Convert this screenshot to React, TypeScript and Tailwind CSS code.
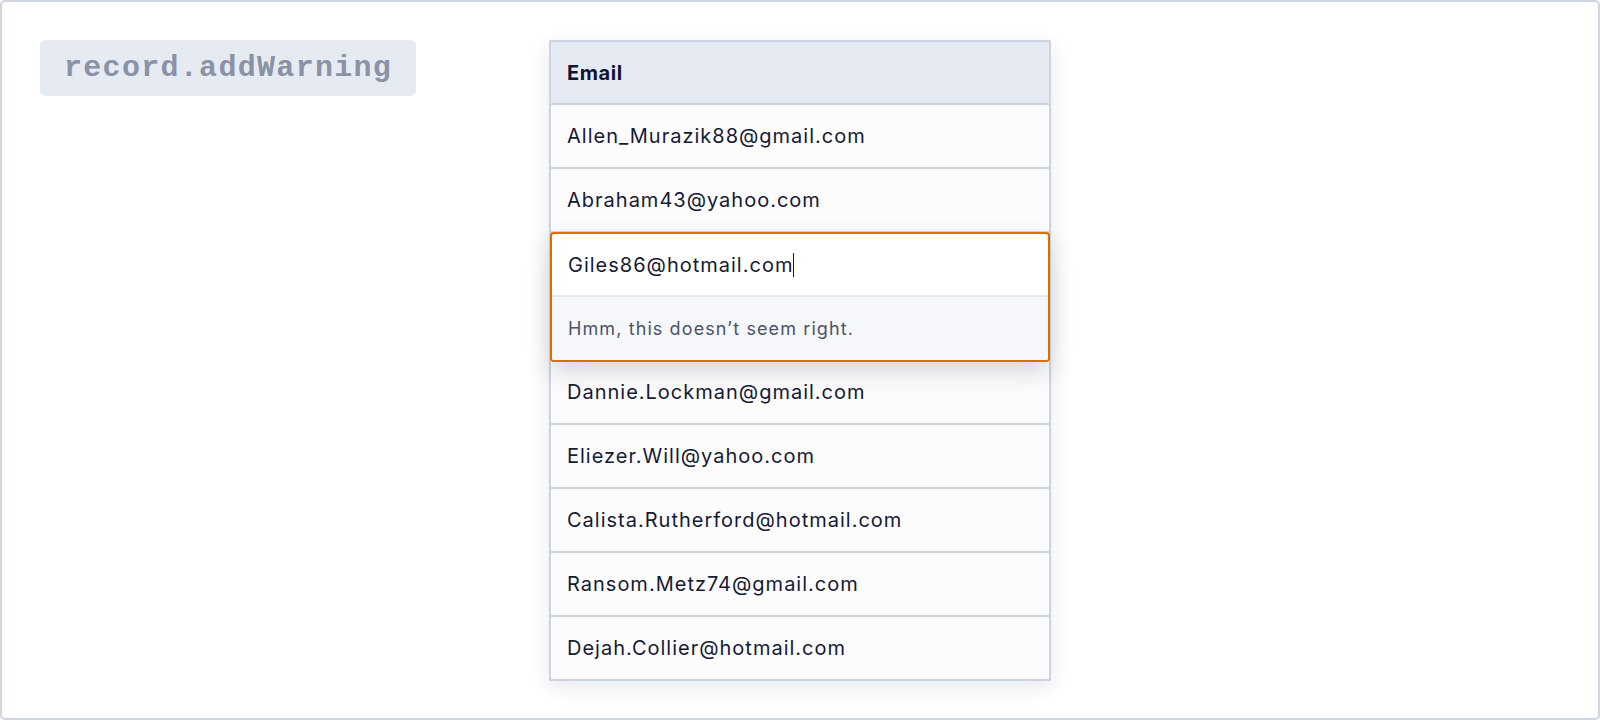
import React from 'react';

const emails = [
  'Allen_Murazik88@gmail.com',
  'Abraham43@yahoo.com',
  'Giles86@hotmail.com',
  'Dannie.Lockman@gmail.com',
  'Eliezer.Will@yahoo.com',
  'Calista.Rutherford@hotmail.com',
  'Ransom.Metz74@gmail.com',
  'Dejah.Collier@hotmail.com',
];

const font = { fontFamily: 'Inter, "Noto Sans", sans-serif' };

function Cell({ children }: { children: React.ReactNode }) {
  return (
    <div className="flex h-16 items-center border-b-2 border-[#cdd4e1] bg-[#fcfcfd] px-4 text-[20px] tracking-[1px] text-[#151a35]">
      {children}
    </div>
  );
}

function WarningCell({ value }: { value: string }) {
  return (
    <div className="relative z-10 -mx-px -my-px overflow-hidden rounded-[4px] border-2 border-[#e06c00] bg-white shadow-[0_10px_24px_rgba(20,30,60,0.16)]">
      <div className="flex h-[63px] items-center border-b-2 border-[#e6eaf1] px-4 text-[20px] tracking-[1px] text-[#151a35]">
        {value}
        <span className="inline-block h-[24px] w-px bg-[#151a35]" />
      </div>
      <div className="flex h-[63px] items-center bg-[#f6f7fa] px-4 text-[18px] tracking-[1.1px] text-[#4a5368]">
        Hmm, this doesn’t seem right.
      </div>
    </div>
  );
}

export default function App() {
  return (
    <div className="h-[720px] w-[1600px] bg-white">
      <div className="flex h-full items-start rounded-[5px] border-2 border-[#cfd5e1] p-[38px]">
        <div className="flex h-14 w-[376px] shrink-0 items-center rounded-md bg-[#e6ebf2] px-6">
          <span
            className="text-[30px] font-bold tracking-[1.3px] text-[#8a92a6]"
            style={{ fontFamily: '"Liberation Mono", monospace' }}
          >
            record.addWarning
          </span>
        </div>
        <div
          className="ml-[133px] w-[502px] border-x-2 border-t-2 border-[#cdd4e1] shadow-[0_6px_20px_rgba(20,30,60,0.10)]"
          style={font}
        >
          <div className="flex h-[63px] items-center border-b-2 border-[#cdd4e1] bg-[#e6ebf3] px-4 text-[20px] font-bold tracking-[0.6px] text-[#0f1433]">
            Email
          </div>
          {emails.map((e) =>
            e === 'Giles86@hotmail.com' ? (
              <WarningCell key={e} value={e} />
            ) : (
              <Cell key={e}>{e}</Cell>
            ),
          )}
        </div>
      </div>
    </div>
  );
}
